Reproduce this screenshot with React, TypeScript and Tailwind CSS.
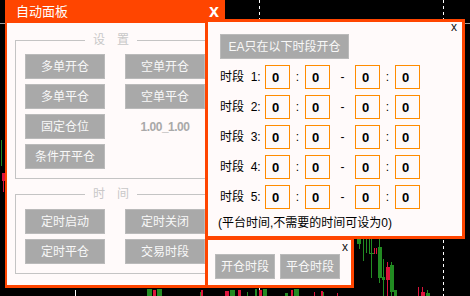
import React from "react";

const FONT = "font-['Liberation_Sans','Noto_Sans_CJK_SC',sans-serif]";

type Bar = [number, number, number, number, "g" | "r"];

// chart bits peeking out from behind the panels
const BARS: Bar[] = [
  [1, 140, 1, 26, "g"], [2, 173, 4, 8, "r"], [3, 181, 1, 11, "r"],
  [357, 239, 4, 5, "g"], [359, 243, 1, 6, "g"], [363, 239, 1, 22, "g"],
  [366, 239, 1, 14, "g"], [369, 239, 1, 14, "g"], [371, 239, 1, 39, "g"],
  [369, 253, 5, 1, "g"], [374, 248, 1, 6, "r"], [376, 248, 1, 6, "r"],
  [379, 237, 1, 46, "g"], [378, 247, 4, 31, "g"], [383, 259, 1, 37, "g"],
  [382, 277, 3, 3, "g"], [387, 262, 1, 34, "r"], [386, 267, 4, 13, "r"],
  [391, 262, 1, 34, "g"], [390, 265, 4, 27, "g"], [394, 290, 3, 6, "g"],
  [418, 287, 1, 9, "r"], [422, 287, 1, 9, "r"], [421, 292, 4, 4, "r"],
  [427, 290, 1, 6, "g"], [426, 293, 4, 3, "g"],
  [147, 289, 1, 7, "g"], [148, 289, 4, 7, "g"], [153, 290, 3, 6, "r"],
  [157, 289, 5, 7, "g"], [200, 292, 1, 4, "g"], [201, 290, 2, 6, "r"],
  [225, 291, 4, 5, "r"], [230, 290, 5, 6, "g"], [238, 290, 3, 6, "r"],
  [247, 292, 1, 4, "g"], [255, 289, 2, 7, "g"], [259, 290, 3, 6, "r"],
  [263, 289, 4, 7, "g"], [285, 293, 3, 3, "g"], [291, 290, 2, 6, "r"],
  [294, 289, 5, 7, "g"], [314, 292, 1, 4, "r"], [321, 291, 2, 5, "r"],
  [323, 292, 1, 4, "g"], [337, 293, 1, 3, "r"],
];

function Chart() {
  return (
    <svg className="absolute left-0 top-0" width={470} height={296} viewBox="0 0 470 296">
      <line x1={0} y1={23.5} x2={470} y2={23.5} stroke="#a0a0a0" strokeWidth={1} />
      <line x1={259.5} y1={0} x2={259.5} y2={296} stroke="#fff" strokeWidth={1} strokeDasharray="3 3" />
      <line x1={443.5} y1={0} x2={443.5} y2={296} stroke="#fff" strokeWidth={1} strokeDasharray="3 3" />
      <line x1={75.5} y1={290} x2={75.5} y2={296} stroke="#fff" strokeWidth={1} />
      {BARS.map(([x, y, w, h, c], i) => (
        <rect key={i} x={x} y={y} width={w} height={h} fill={c === "g" ? "#228b22" : "#dc143c"} />
      ))}
    </svg>
  );
}

function Btn({ label, className = "" }: { label: string; className?: string }) {
  return (
    <div
      className={`h-[25px] flex items-center justify-center bg-[#a9a9a9] border border-[#bababa] text-[12px] leading-none text-[#f8f8f8] ${className}`}
    >
      {label}
    </div>
  );
}

function Group({ title, children, className = "" }: { title: string; children: React.ReactNode; className?: string }) {
  return (
    <div className={`relative w-[200px] border border-[#c4c4c4] pl-[9px] pr-[9px] pb-[9px] ${className}`}>
      <div className="absolute left-[69px] top-[-9px] h-[17px] px-[8px] bg-[#fffafa] text-[12px] leading-[17px] text-[#c8c8c8]">
        {title}
      </div>
      {children}
    </div>
  );
}

function MainPanel() {
  return (
    <div className={`absolute left-[5px] top-0 w-[220px] h-[288px] flex flex-col border-l-2 border-r-2 border-b-[3px] border-[#ff4500] bg-[#fffafa] ${FONT}`}>
      <div className="h-[23px] shrink-0 flex items-center justify-between bg-[#ff4500] pl-[9px] pr-[4px]">
        <span className="text-[13px] leading-none text-white">自动面板</span>
        <span className="text-[18px] font-bold leading-none text-white pb-[2px]">x</span>
      </div>
      <div className="pl-[8px] pt-[17px]">
        <Group title="设　置" className="pt-[13px]">
          <div className="grid grid-cols-[80px_80px] gap-x-[20px] gap-y-[5px]">
            <Btn label="多单开仓" />
            <Btn label="空单开仓" />
            <Btn label="多单平仓" />
            <Btn label="空单平仓" />
            <Btn label="固定仓位" />
            <div className="h-[25px] flex items-center justify-center text-[12px] font-bold leading-none tracking-[-0.5px] text-[#a9a9a9] font-['Liberation_Sans',sans-serif]">
              1.00_1.00
            </div>
            <Btn label="条件开平仓" />
          </div>
        </Group>
        <Group title="时　间" className="mt-[15px] pt-[14px]">
          <div className="grid grid-cols-[80px_80px] gap-x-[20px] gap-y-[5px]">
            <Btn label="定时启动" />
            <Btn label="定时关闭" />
            <Btn label="定时平仓" />
            <Btn label="交易时段" />
          </div>
        </Group>
      </div>
    </div>
  );
}

function TimeBox() {
  return (
    <div className="w-[25px] h-[24px] flex items-center pl-[6px] border border-[#ff8c00] bg-[#fffafa] text-[13px] font-bold leading-none text-black font-['Liberation_Sans',sans-serif]">
      0
    </div>
  );
}

function PeriodRow({ n }: { n: number }) {
  return (
    <div className="h-[24px] flex items-center text-[12px] leading-none text-black">
      <span className="w-[45px] whitespace-pre">{`时段  ${n}:`}</span>
      <TimeBox />
      <span className="w-[15px] text-center">:</span>
      <TimeBox />
      <span className="w-[25px] text-center">-</span>
      <TimeBox />
      <span className="w-[15px] text-center">:</span>
      <TimeBox />
    </div>
  );
}

function PeriodPanel() {
  return (
    <div className={`absolute left-[205px] top-[19px] w-[260px] h-[220px] border-[3px] border-[#ff4500] bg-[#fffafa] ${FONT}`}>
      <span className="absolute right-[5px] top-[-1px] text-[12px] leading-none text-[#111]">x</span>
      <div className="flex flex-col gap-[6px] pt-[12px] pl-[12px]">
        <Btn label="EA只在以下时段开仓" className="w-[129px] h-[24px]" />
        {[1, 2, 3, 4, 5].map((n) => (
          <PeriodRow key={n} n={n} />
        ))}
        <div className="ml-[-2px] h-[17px] text-[12px] leading-[17px] text-black whitespace-nowrap">
          (平台时间,不需要的时间可设为0)
        </div>
      </div>
    </div>
  );
}

function SmallPanel() {
  return (
    <div className={`absolute left-[205px] top-[237px] w-[149px] h-[51px] border-[3px] border-[#ff4500] bg-[#fffafa] ${FONT}`}>
      <span className="absolute right-[3px] top-[1px] text-[12px] leading-none text-[#111]">x</span>
      <div className="flex gap-[5px] pt-[14px] pl-[7px]">
        <Btn label="开仓时段" className="w-[60px] h-[24px]" />
        <Btn label="平仓时段" className="w-[60px] h-[24px]" />
      </div>
    </div>
  );
}

export default function App() {
  return (
    <div className="relative w-[470px] h-[296px] overflow-hidden bg-black">
      <Chart />
      <MainPanel />
      <PeriodPanel />
      <SmallPanel />
    </div>
  );
}
